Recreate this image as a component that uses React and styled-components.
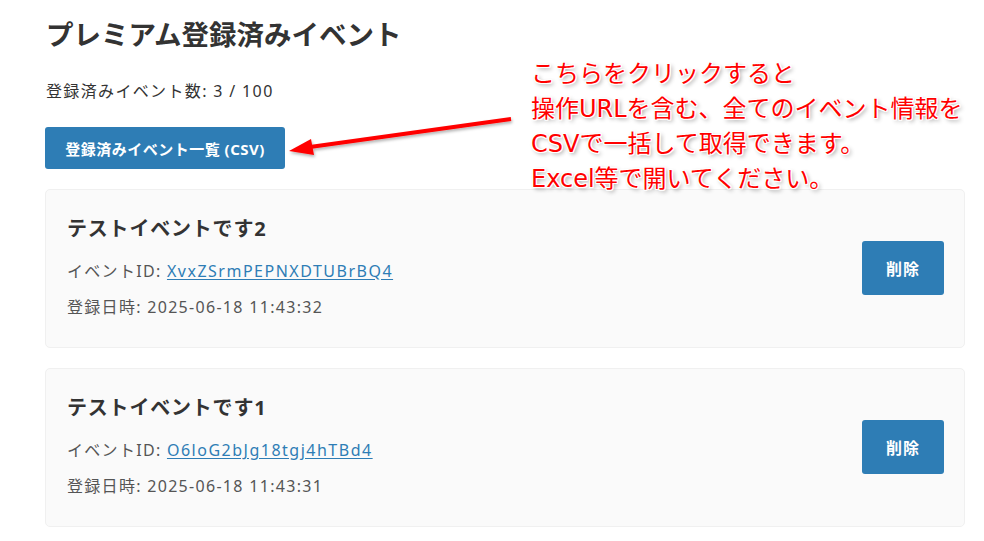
import React from 'react';
import styled, { createGlobalStyle } from 'styled-components';

const events = [
  { title: 'テストイベントです2', id: 'XvxZSrmPEPNXDTUBrBQ4', date: '2025-06-18 11:43:32' },
  { title: 'テストイベントです1', id: 'O6loG2bJg18tgj4hTBd4', date: '2025-06-18 11:43:31' },
];

const noteLines = [
  'こちらをクリックすると',
  '操作URLを含む、全てのイベント情報を',
  'CSVで一括して取得できます。',
  'Excel等で開いてください。',
];

export default function App() {
  return (
    <Page>
      <GlobalStyle />
      <Title>プレミアム登録済みイベント</Title>
      <Count>登録済みイベント数: 3 / 100</Count>
      <CsvBtn>登録済みイベント一覧 (CSV)</CsvBtn>
      <List>
        {events.map(ev => (
          <Card key={ev.id}>
            <Info>
              <CardTitle>{ev.title}</CardTitle>
              <Meta $first>
                イベントID: <IdLink href="#">{ev.id}</IdLink>
              </Meta>
              <Meta>登録日時: {ev.date}</Meta>
            </Info>
            <DeleteBtn>削除</DeleteBtn>
          </Card>
        ))}
      </List>

      {/* 説明の吹き出し（スクショ上の注釈） */}
      <Arrow width="240" height="50" viewBox="0 0 240 50">
        <defs>
          <filter id="sh" x="-10%" y="-50%" width="120%" height="200%">
            <feDropShadow dx="1" dy="2" stdDeviation="1.5" floodColor="#000" floodOpacity="0.3" />
          </filter>
        </defs>
        <g filter="url(#sh)">
          <line x1="231" y1="9" x2="30" y2="37" stroke="#ff0000" strokeWidth="4" />
          <polygon points="9,41 31,29 34,45" fill="#ff0000" />
        </g>
      </Arrow>
      <Note>
        {noteLines.map(l => (
          <NoteLine key={l}>{l}</NoteLine>
        ))}
      </Note>
    </Page>
  );
}

const GlobalStyle = createGlobalStyle`
  body {
    margin: 0;
    background: #fff;
    font-family: "Noto Sans", "Noto Sans CJK JP", sans-serif;
    color: #333;
  }
`;

const Page = styled.div`
  position: relative;
  width: 920px;
  padding: 19px 0 0 45px;
`;

const Title = styled.h1`
  margin: 0 0 28px 1px;
  font-size: 27.5px;
  line-height: 32px;
  font-weight: 700;
  color: #333;
`;

const Count = styled.p`
  margin: 0 0 24px 1px;
  font-size: 16px;
  line-height: 24px;
  letter-spacing: 1.35px;
  color: #333;
`;

const CsvBtn = styled.button`
  width: 240px;
  height: 42px;
  padding: 0;
  border: 0;
  border-radius: 3px;
  background: #2e7db5;
  color: #fff;
  font-family: inherit;
  font-size: 15px;
  font-weight: 700;
  letter-spacing: 0.5px;
  cursor: pointer;
`;

const List = styled.div`
  display: flex;
  flex-direction: column;
  gap: 20px;
  margin-top: 20px;
`;

const Card = styled.div`
  display: flex;
  align-items: center;
  justify-content: space-between;
  height: 159px;
  box-sizing: border-box;
  padding: 0 20px 0 21px;
  background: #fafafa;
  border: 1px solid #f0f0f0;
  border-radius: 5px;
`;

const Info = styled.div`
  display: flex;
  flex-direction: column;
  padding-bottom: 4px;
`;

const CardTitle = styled.h2`
  margin: 0;
  font-size: 20px;
  line-height: 28px;
  font-weight: 700;
  letter-spacing: 0.8px;
  color: #333;
`;

const Meta = styled.p`
  margin: ${p => (p.$first ? '16px' : '12px')} 0 0;
  font-size: 16px;
  line-height: 24px;
  letter-spacing: 1.3px;
  color: #555;
`;

const IdLink = styled.a`
  color: #2e7db5;
  letter-spacing: 1.5px;
  text-decoration: underline;
  text-underline-offset: 2px;
`;

const DeleteBtn = styled.button`
  width: 82px;
  height: 54px;
  margin-bottom: 2px;
  border: 0;
  border-radius: 3px;
  background: #2e7db5;
  color: #fff;
  font-family: inherit;
  font-size: 16px;
  font-weight: 700;
  letter-spacing: 1px;
  cursor: pointer;
`;

const Arrow = styled.svg`
  position: absolute;
  left: 280px;
  top: 110px;
`;

const Note = styled.div`
  position: absolute;
  left: 531px;
  top: 57px;
  display: flex;
  flex-direction: column;
`;

const NoteLine = styled.span`
  font-family: "DejaVu Sans", "Noto Sans CJK JP", sans-serif;
  font-size: 24px;
  line-height: 35px;
  color: #ff0000;
  white-space: nowrap;
  text-shadow:
    1px 0 0 #fff, -1px 0 0 #fff, 0 1px 0 #fff, 0 -1px 0 #fff,
    1px 1px 0 #fff, -1px -1px 0 #fff, 1px -1px 0 #fff, -1px 1px 0 #fff,
    2px 2px 4px rgba(0, 0, 0, 0.45);
`;
